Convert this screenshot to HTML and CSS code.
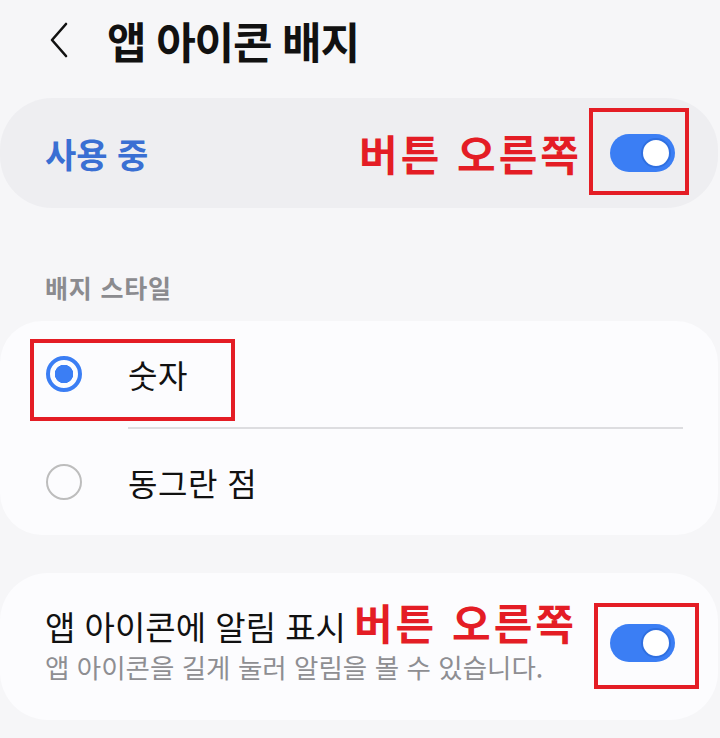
FILE: index.html
```html
<!DOCTYPE html>
<html lang="ko">
<head>
  <meta charset="utf-8">
  <title>앱 아이콘 배지</title>
  <link rel="stylesheet" href="styles.css">
</head>
<body>
  <div class="header">
    <svg class="back" width="20" height="36" viewBox="0 0 20 36">
      <path d="M17 2 L3 18 L17 34" fill="none" stroke="#111" stroke-width="2.6" stroke-linecap="round" stroke-linejoin="round"/>
    </svg>
    <h1>앱 아이콘 배지</h1>
  </div>

  <div class="card card-main">
    <span class="main-label">사용 중</span>
    <span class="note">버튼 오른쪽</span>
    <span class="switch"><span class="knob"></span></span>
    <span class="mark mark-1"></span>
  </div>

  <div class="section-title">배지 스타일</div>

  <div class="card card-list">
    <div class="option">
      <span class="radio checked"></span>
      <span class="option-text">숫자</span>
    </div>
    <div class="divider"></div>
    <div class="option">
      <span class="radio"></span>
      <span class="option-text">동그란 점</span>
    </div>
    <span class="mark mark-2"></span>
  </div>

  <div class="card card-item">
    <div class="item-text">
      <div class="item-title">앱 아이콘에 알림 표시<span class="note">버튼 오른쪽</span></div>
      <div class="item-sub">앱 아이콘을 길게 눌러 알림을 볼 수 있습니다.</div>
    </div>
    <span class="switch"><span class="knob"></span></span>
    <span class="mark mark-3"></span>
  </div>
</body>
</html>
```

FILE: styles.css
```css
html {
  --blue: #3b7ef4;
  --red: #e41d25;
}

body {
  margin: 0;
  background: #f6f6f8;
  font-family: "Noto Sans CJK KR", "Noto Sans", sans-serif;
  color: #111;
}

.header {
  display: flex;
  align-items: center;
  height: 80px;
  padding-left: 49px;
}

.header h1 {
  margin: 0 0 0 38px;
  font-size: 43px;
  font-weight: 700;
  letter-spacing: -1.2px;
  line-height: 1;
}

.card {
  position: relative;
  width: 718px;
  box-sizing: border-box;
}

.card-main {
  display: flex;
  align-items: center;
  height: 110px;
  margin-top: 18px;
  padding: 0 43px 0 45px;
  background: #eeeef1;
  border-radius: 52px;
}

.main-label {
  flex: 1;
  font-size: 34px;
  font-weight: 700;
  color: #3a6fd3;
}

.note {
  font-size: 42px;
  font-weight: 700;
  color: var(--red);
  letter-spacing: 3px;
  line-height: 1;
}

.switch {
  position: relative;
  flex: none;
  width: 65px;
  height: 38px;
  margin-left: 28px;
  border-radius: 19px;
  background: var(--blue);
}

.knob {
  position: absolute;
  top: 4px;
  right: 4px;
  width: 26px;
  height: 26px;
  border: 2px solid #2f6fe0;
  border-radius: 50%;
  background: #fff;
}

.mark {
  position: absolute;
  border: 4px solid var(--red);
  box-sizing: border-box;
}

.mark-1 {
  top: 10px;
  left: 589px;
  width: 100px;
  height: 87px;
}

.section-title {
  height: 113px;
  padding: 64px 0 0 45px;
  box-sizing: border-box;
  font-size: 25px;
  font-weight: 700;
  color: #8b8b8f;
  line-height: 30px;
  letter-spacing: 0.8px;
}

.card-list {
  background: #fcfcfe;
  border-radius: 42px;
  padding: 0;
}

.option {
  display: flex;
  align-items: center;
  height: 106px;
  padding-left: 46px;
}

.radio {
  width: 36px;
  height: 36px;
  box-sizing: border-box;
  border: 2.5px solid #bdbdbd;
  border-radius: 50%;
}

.radio.checked {
  border: 4px solid var(--blue);
  background: radial-gradient(circle, var(--blue) 0 9px, transparent 9.5px);
}

.option-text {
  margin-left: 46px;
  font-size: 32px;
  letter-spacing: 0.5px;
}

.divider {
  height: 2px;
  margin: 0 35px 0 128px;
  background: #dddde0;
}

.mark-2 {
  top: 18px;
  left: 30px;
  width: 205px;
  height: 82px;
}

.card-item {
  display: flex;
  align-items: center;
  height: 147px;
  margin-top: 38px;
  padding: 0 43px 8px 45px;
  background: #fcfcfe;
  border-radius: 48px;
}

.item-text {
  flex: 1;
}

.item-title {
  font-size: 33px;
  line-height: 46px;
  white-space: nowrap;
}

.item-title .note {
  margin-left: 8px;
}

.item-sub {
  font-size: 26.5px;
  color: #8e8e92;
  line-height: 36px;
  white-space: nowrap;
}

.mark-3 {
  top: 30px;
  left: 594px;
  width: 105px;
  height: 86px;
}
```
